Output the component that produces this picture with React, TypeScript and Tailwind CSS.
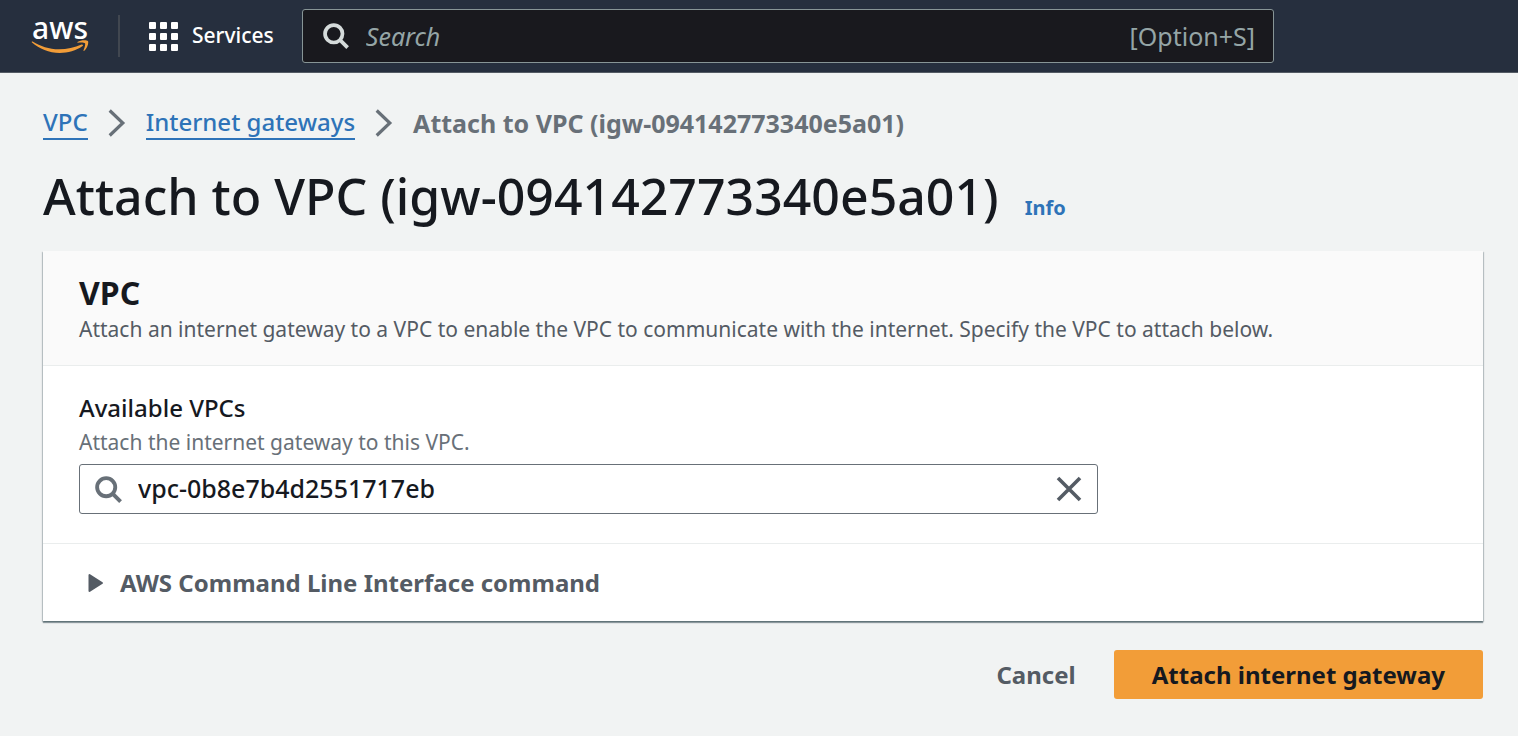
import { useState } from "react";

function SearchIcon({ className }: { className: string }) {
  return (
    <svg viewBox="0 0 28 28" fill="none" stroke="currentColor" strokeWidth="4" className={className} aria-hidden="true">
      <circle cx="11.6" cy="11.6" r="9.4" />
      <path d="M18.2 18.2 26.5 26.5" />
    </svg>
  );
}

function Chevron() {
  return (
    <svg viewBox="0 0 18 28" fill="none" stroke="currentColor" strokeWidth="3.2" className="h-7 w-[18px] shrink-0 text-[#687078]" aria-hidden="true">
      <path d="M1.700 1.500 14.800 14 1.700 26.500" />
    </svg>
  );
}

function AwsLogo() {
  return (
    <a href="#home" aria-label="AWS home" className="flex w-[58px] flex-col items-center pb-0.5 text-white">
      <span className="text-[30px] leading-[24px] font-medium">aws</span>
      <svg viewBox="0 0 58 14" className="h-[14px] w-[58px] text-[#f29d38]" fill="currentColor" aria-hidden="true">
        <path d="M1.600 1.500C9.500 6.400 18 9.300 28 9.300C36 9.300 43.500 7.700 50.600 4.600C51.700 4.200 52.600 5.300 51.600 6.100C45 10.800 37 13 28.700 13C18 13 8.300 8.700 1 2.500C.4 1.900.9 1.100 1.600 1.500Z" />
        <path d="M46.500 1.900C49.500-.1 55.800-.2 56.900 1C58 2.400 56.300 8.300 53.300 10.700C52.800 11.100 52.300 10.900 52.500 10.300C53.300 8.300 54.700 4.300 54 3.300C53.200 2.300 49.200 2.500 47 2.700C46.300 2.800 46 2.300 46.500 1.900Z" />
      </svg>
    </a>
  );
}

function AppGrid() {
  return (
    <span className="grid grid-cols-3 gap-1" aria-hidden="true">
      {Array.from({ length: 9 }, (_, i) => (
        <span key={i} className="size-[7px] rounded-[1px] bg-white" />
      ))}
    </span>
  );
}

function TopBar() {
  return (
    <header className="flex h-[73px] items-center border-b border-[#545b64] bg-[#262f3e] pl-[31px]">
      <AwsLogo />
      <span className="ml-[29px] h-[42px] w-[2px] bg-[#414750]" />
      <button type="button" className="ml-[29px] flex items-center gap-3.5 text-[21px] leading-7 font-medium text-white">
        <AppGrid />
        <span className="pb-0.5">Services</span>
      </button>
      <label className="mr-[244px] ml-7 flex h-[54px] flex-1 items-center rounded-[3px] border border-[#879596] bg-[#19191e] px-[18px]">
        <SearchIcon className="ml-[2px] size-[26px] shrink-0 text-[#d5dbdb]" />
        <input
          type="search"
          aria-label="Search"
          placeholder="Search"
          className="ml-[17px] min-w-0 flex-1 bg-transparent pt-0.5 text-[25px] text-white italic outline-none placeholder:text-[#95a5a6]"
        />
        <span className="pt-0.5 text-[25px] text-[#95a5a6]">[Option+S]</span>
      </label>
    </header>
  );
}

function Breadcrumbs() {
  return (
    <nav aria-label="Breadcrumbs">
      <ol className="flex items-center gap-5 leading-8">
        <li>
          <a href="#vpc" className="block border-b-2 border-[#2e73b8] text-[24px] font-medium text-[#2e73b8]">VPC</a>
        </li>
        <li><Chevron /></li>
        <li>
          <a href="#gateways" className="block border-b-2 border-[#2e73b8] text-[24px] font-medium text-[#2e73b8]">Internet gateways</a>
        </li>
        <li><Chevron /></li>
        <li className="text-[25px] font-bold text-[#687078]" aria-current="page">Attach to VPC (igw-094142773340e5a01)</li>
      </ol>
    </nav>
  );
}

export default function App() {
  const [vpc, setVpc] = useState("vpc-0b8e7b4d2551717eb");
  return (
    <div className="min-h-screen bg-[#f1f3f3] font-['Noto_Sans',sans-serif] text-[#16191f]">
      <TopBar />
      <main className="pt-[33px] pr-[35px] pb-9 pl-[43px]">
        <Breadcrumbs />
        <div className="mt-6 flex items-baseline gap-[26px]">
          <h1 className="text-[50px] leading-[64px] font-medium">Attach to VPC (igw-094142773340e5a01)</h1>
          <a href="#info" className="text-[20px] leading-7 font-bold text-[#2e73b8]">Info</a>
        </div>

        <section className="mt-[23px] bg-white shadow-[0_2px_1px_#001c2460,1px_1px_1px_#001c2430,-1px_1px_1px_#001c2430]">
          <div className="border-b border-[#eaeded] bg-[#fafafa] px-9 pt-6 pb-[18px]">
            <h2 className="text-[32px] leading-9 font-bold">VPC</h2>
            <p className="text-[21px] leading-9 text-[#545b64]">
              Attach an internet gateway to a VPC to enable the VPC to communicate with the internet. Specify the VPC to attach below.
            </p>
          </div>
          <div className="border-b border-[#eaeded] px-9 pt-6 pb-[29px]">
            <label htmlFor="vpc" className="block text-[24px] leading-9 font-medium">Available VPCs</label>
            <p className="text-[21px] leading-8 text-[#687078]">Attach the internet gateway to this VPC.</p>
            <div className="w-3/4 pt-1.5 pr-[7px]">
              <div className="flex h-[50px] items-center rounded-[3px] border border-[#687078] px-[15px]">
                <SearchIcon className="size-[27px] shrink-0 text-[#687078]" />
                <input
                  id="vpc"
                  type="text"
                  value={vpc}
                  onChange={(e) => setVpc(e.target.value)}
                  className="ml-4 min-w-0 flex-1 bg-transparent text-[25px] font-medium outline-none"
                />
                <button type="button" aria-label="Clear" onClick={() => setVpc("")} className="text-[#545b64]">
                  <svg viewBox="0 0 26 26" className="size-[26px]" fill="none" stroke="currentColor" strokeWidth="3.6" aria-hidden="true">
                    <path d="M2 2 24 24M24 2 2 24" />
                  </svg>
                </button>
              </div>
            </div>
          </div>
          <button type="button" className="flex w-full items-center gap-4 px-[45px] pt-[21px] pb-5 text-left text-[24px] leading-9 font-bold text-[#545b64]">
            <svg viewBox="0 0 16 20" className="h-5 w-4" fill="currentColor" stroke="currentColor" strokeWidth="2" strokeLinejoin="round" aria-hidden="true">
              <path d="M1.500 2V18L14 10Z" />
            </svg>
            AWS Command Line Interface command
          </button>
        </section>

        <div className="mt-[29px] flex items-center justify-end gap-[38px] text-[24px] leading-8 font-bold">
          <button type="button" className="text-[#545b64]">Cancel</button>
          <button type="button" className="rounded-[3px] bg-[#f29d38] px-[38px] pt-[9px] pb-2 text-[#16191f]">Attach internet gateway</button>
        </div>
      </main>
    </div>
  );
}
